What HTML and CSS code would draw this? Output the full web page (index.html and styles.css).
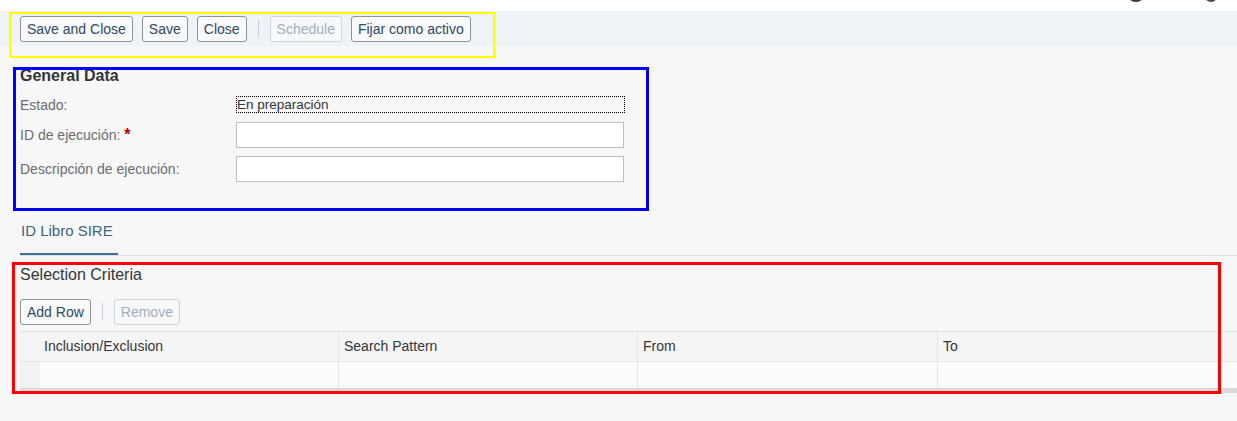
FILE: index.html
```html
<!DOCTYPE html>
<html>
<head>
<meta charset="utf-8">
<link rel="stylesheet" href="styles.css">
</head>
<body>
<div class="topbar">
  <span class="avatar avatar-a"></span>
  <span class="avatar avatar-b"></span>
</div>
<div class="toolbar">
  <button class="btn">Save and Close</button>
  <button class="btn">Save</button>
  <button class="btn">Close</button>
  <span class="sep"></span>
  <button class="btn disabled">Schedule</button>
  <button class="btn">Fijar como activo</button>
</div>

<section class="general">
  <h2 class="title-bold">General Data</h2>
  <div class="row row1">
    <label class="lbl">Estado:</label>
    <div class="value">En preparación</div>
  </div>
  <div class="row row2">
    <label class="lbl">ID de ejecución: <span class="req">*</span></label>
    <div class="input"></div>
  </div>
  <div class="row row3">
    <label class="lbl">Descripción de ejecución:</label>
    <div class="input"></div>
  </div>
</section>

<div class="tabbar">
  <div class="tab">ID Libro SIRE</div>
</div>

<section class="criteria">
  <h2 class="title">Selection Criteria</h2>
  <div class="actions">
    <button class="btn">Add Row</button>
    <span class="sep"></span>
    <button class="btn disabled">Remove</button>
  </div>
  <div class="table">
    <div class="hrow">
      <div class="sel"></div>
      <div class="cell first">Inclusion/Exclusion</div>
      <div class="cell">Search Pattern</div>
      <div class="cell">From</div>
      <div class="cell">To</div>
    </div>
    <div class="drow">
      <div class="sel"></div>
      <div class="cell first"></div>
      <div class="cell"></div>
      <div class="cell"></div>
      <div class="cell"></div>
    </div>
    <div class="scroll"></div>
  </div>
</section>

<div class="mark mark-yellow"></div>
<div class="mark mark-blue"></div>
<div class="mark mark-red"></div>
</body>
</html>
```

FILE: styles.css
```css
* { box-sizing: border-box; }
html, body { margin: 0; padding: 0; }
body {
  background: #f7f7f7;
  font-family: "Liberation Sans", Arial, sans-serif;
  color: #32363a;
  width: 1237px;
  height: 421px;
  overflow: hidden;
  position: relative;
}

.topbar {
  height: 11px;
  background: #ffffff;
  position: relative;
  overflow: hidden;
}
.avatar {
  position: absolute;
  border-radius: 50%;
}
.avatar-a {
  left: 1126px;
  top: -19px;
  width: 20px;
  height: 21px;
  background: #3a3a3a;
}
.avatar-b {
  left: 1204px;
  top: -13px;
  width: 14px;
  height: 15px;
  background: linear-gradient(90deg, #6b5a4a, #2e3c4c);
}

.toolbar {
  height: 35px;
  background: #eef3f7;
  padding: 5px 20px 0;
  display: flex;
  align-items: flex-start;
  gap: 9px;
}

.btn {
  height: 26px;
  padding: 0 6px;
  border: 1px solid #8d9399;
  border-radius: 3px;
  background: #f8f9fa;
  color: #2f4a66;
  font-family: "Liberation Sans", Arial, sans-serif;
  font-size: 14px;
  line-height: 24px;
  white-space: nowrap;
}
.btn.disabled {
  color: #9fb0c2;
  border-color: #cfd6dd;
  background: #f6f8fa;
}
.sep {
  width: 1px;
  height: 17px;
  margin: 4px 2px 0;
  background: #c7ced6;
}

.general {
  padding: 0 20px;
}
.title-bold {
  margin: 20px 0 0;
  font-size: 16px;
  line-height: 19px;
  font-weight: bold;
  color: #32363a;
}
.title {
  margin: 0;
  font-size: 16px;
  line-height: 19px;
  font-weight: normal;
  color: #32363a;
}
.row {
  display: flex;
  align-items: center;
}
.row1 { margin-top: 11px; height: 17px; }
.row2 { margin-top: 9px; height: 26px; }
.row3 { margin-top: 8px; height: 26px; }
.lbl {
  width: 216px;
  font-size: 14px;
  line-height: 16px;
  color: #6a6d70;
}
.req {
  color: #bb0000;
  font-weight: bold;
  font-size: 16px;
}
.value {
  width: 389px;
  height: 17px;
  border: 1px dotted #000000;
  font-size: 13.5px;
  line-height: 15px;
  color: #32363a;
  padding-left: 0;
}
.input {
  width: 388px;
  height: 26px;
  border: 1px solid #bfbfbf;
  background: #ffffff;
}

.tabbar {
  margin: 36px 0 0 20px;
  border-bottom: 1px solid #d9e3ec;
  display: flex;
}
.tab {
  padding: 4px 3px 13px 1px;
  width: 98px;
  font-size: 15px;
  line-height: 18px;
  color: #3d6489;
  border-bottom: 2px solid #3f6d95;
}

.criteria {
  padding: 0 0 0 20px;
  margin-top: 9px;
}
.actions {
  margin-top: 15px;
  display: flex;
  align-items: flex-start;
  gap: 9px;
}

.table {
  margin-top: 6px;
}
.hrow, .drow {
  display: grid;
  grid-template-columns: 20px 298px 299px 300px 1fr;
}
.hrow {
  height: 31px;
  background: #f5f5f5;
  border-top: 1px solid #e5e5e5;
  border-bottom: 1px solid #e5e5e5;
}
.hrow .cell {
  font-size: 14px;
  line-height: 28px;
  padding-left: 5px;
  border-left: 1px solid #e5e5e5;
  color: #32363a;
}
.hrow .cell.first {
  border-left: none;
  padding-left: 4px;
}
.drow {
  height: 26px;
  background: #fcfcfc;
}
.drow .sel { background: #f2f2f2; }
.drow .cell { border-left: 1px solid #e5e5e5; }
.drow .cell.first { border-left: none; }
.scroll {
  height: 5px;
  background: #dadada;
}

.mark {
  position: absolute;
  pointer-events: none;
}
.mark-yellow {
  left: 9px;
  top: 12px;
  width: 486px;
  height: 46px;
  border: 2px solid #ffff00;
}
.mark-blue {
  left: 13px;
  top: 67px;
  width: 636px;
  height: 144px;
  border: 3px solid #0000ff;
}
.mark-red {
  left: 12px;
  top: 262px;
  width: 1209px;
  height: 132px;
  border: 3px solid #ff0000;
}
```
